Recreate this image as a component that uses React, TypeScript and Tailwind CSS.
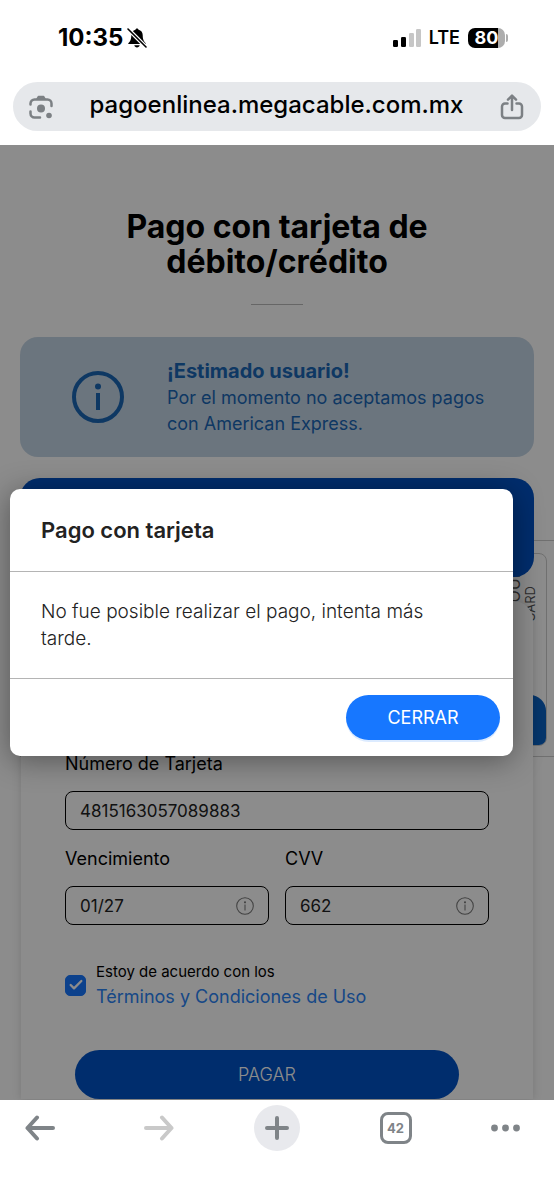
import React, { useState } from 'react';
import { Check } from 'lucide-react';

const StatusBar: React.FC = () => (
  <div className="flex h-[82px] items-center justify-between pr-[46px] pl-[58px] pb-1.5">
    <div className="flex items-center gap-1">
      <span className="text-2xl leading-7 font-bold">10:35</span>
      <svg viewBox="0 0 20 20" className="h-5 w-5">
        <path d="M10 .5c.9 0 1.500.6 1.500 1.300 2.600.6 4.200 2.600 4.200 5.200 0 4.500 1 6.300 3 8.200v.9H1.300v-.9c2-1.900 3-3.700 3-8.200 0-2.600 1.600-4.600 4.200-5.200C8.500 1.100 9.100.5 10 .5zM7.300 17.300h5.400c-.3 1.300-1.300 2.100-2.700 2.100s-2.400-.8-2.700-2.100z" fill="#000" />
        <path d="M1 1l18 18" stroke="#fff" strokeWidth="4" />
        <path d="M1 1l18 18" stroke="#000" strokeWidth="1.6" strokeLinecap="round" />
      </svg>
    </div>
    <div className="flex items-center gap-2">
      <svg viewBox="0 0 28 18" className="h-[18px] w-7">
        <rect x="0" y="11" width="5" height="7" rx="1.2" fill="#000" />
        <rect x="8" y="8" width="5" height="10" rx="1.2" fill="#000" />
        <rect x="16" y="4" width="5" height="14" rx="1.2" fill="#c6c6c6" />
        <rect x="23" y="0" width="5" height="18" rx="1.2" fill="#c6c6c6" />
      </svg>
      <span className="text-lg leading-6 font-semibold">LTE</span>
      <div className="flex items-center">
        <div className="flex h-5 w-[37px] items-center justify-center rounded-[7px] bg-linear-to-r from-black from-80% to-[#adadad] to-80%">
          <span className="text-lg leading-5 font-bold text-white">80</span>
        </div>
        <span className="ml-px h-2 w-0.5 rounded-r bg-[#adadad]" />
      </div>
    </div>
  </div>
);

const AddressBar: React.FC = () => (
  <div className="mx-[13px] mb-3.5 flex h-[49px] items-center justify-between rounded-full bg-[#e6e8eb] pr-[17px] pl-4 text-[#7c8084]">
    <button type="button" aria-label="Buscar con Lens">
      <svg viewBox="0 0 24 24" className="h-6 w-6" fill="none" stroke="currentColor" strokeWidth="2.5" strokeLinecap="round">
        <path d="M1.500 9.500V8.500a4 4 0 0 1 4-4h13a4 4 0 0 1 4 4V11M1.500 16.500v2a4 4 0 0 0 4 4H11" />
        <path d="M8 4l1.500-2.500h5L16 4z" fill="currentColor" strokeLinejoin="round" strokeWidth="1.5" />
        <circle cx="12" cy="13.5" r="4" fill="currentColor" stroke="none" />
        <circle cx="20" cy="20.5" r="2.8" fill="currentColor" stroke="none" />
      </svg>
    </button>
    <span className="pb-1 text-2xl leading-8 font-medium text-black">pagoenlinea.megacable.com.mx</span>
    <button type="button" aria-label="Compartir">
      <svg viewBox="0 0 24 26" className="h-[26px] w-6" fill="none" stroke="currentColor" strokeWidth="2.5" strokeLinecap="round" strokeLinejoin="round">
        <path d="M7.500 9.500H5a3 3 0 0 0-3 3V21a3 3 0 0 0 3 3h14a3 3 0 0 0 3-3v-8.500a3 3 0 0 0-3-3h-2.500M12 16V2M8 5.700L12 1.700l4 4" />
      </svg>
    </button>
  </div>
);

const InfoIcon: React.FC<{ className: string; stroke: number }> = ({ className, stroke }) => (
  <svg viewBox="0 0 52 52" className={className} fill="none" stroke="currentColor" strokeWidth={stroke}>
    <circle cx="26" cy="26" r="24" />
    <path d="M26 22v17" />
    <circle cx="26" cy="15.5" r="3" fill="currentColor" stroke="none" />
  </svg>
);

const Field: React.FC<{ id: string; label: string; value: string; info?: boolean }> = ({ id, label, value, info }) => (
  <div className="min-w-0">
    <label htmlFor={id} className="block text-lg leading-6">{label}</label>
    <div className="mt-[15px] flex h-[39px] items-center rounded-lg border border-black px-3.5">
      <input id={id} type="text" defaultValue={value} className="w-full min-w-0 bg-transparent text-[17px] leading-6 text-[#222] outline-none" />
      {info && <InfoIcon className="h-[18px] w-[18px] shrink-0 text-[#777]" stroke={3} />}
    </div>
  </div>
);

const Modal: React.FC<{ onClose: () => void }> = ({ onClose }) => (
  <div role="dialog" aria-labelledby="modal-title" className="absolute top-[344px] right-[41px] left-2.5 rounded-[10px] bg-white text-[#222] shadow-[0_4px_30px_rgba(0,0,0,0.4)]">
    <h2 id="modal-title" className="border-b border-[#b4b4b4] px-[31px] py-[27px] text-[22px] leading-7 font-semibold">Pago con tarjeta</h2>
    <p className="border-b border-[#b4b4b4] py-[26px] pr-20 pl-[31px] text-[19px] leading-[27px] font-light">
      No fue posible realizar el pago, intenta más tarde.
    </p>
    <div className="flex justify-end px-[13px] py-4">
      <button type="button" onClick={onClose} className="h-[45px] w-[154px] rounded-full bg-[#1777ff] text-lg leading-6 text-white shadow-[0_2px_0_rgba(23,119,255,0.15)]">CERRAR</button>
    </div>
  </div>
);

const PaymentForm: React.FC = () => (
  <div className="relative mx-5 mt-[21px]">
    {/* Card preview behind the form */}
    <div className="absolute top-[62px] -right-5 left-0 h-[217px] border-y border-[#ccc] bg-white">
      <div className="absolute top-3 right-[7px] left-0 flex h-[193px] items-start justify-end overflow-hidden rounded-lg border border-[#ccc] text-[#555]">
        <span className="mt-5 rotate-180 text-base leading-4 [writing-mode:vertical-rl]">OUI</span>
        <span className="mt-8 mr-2 rotate-180 text-[13px] leading-4 [writing-mode:vertical-rl]">CARD</span>
        <div className="absolute right-0 bottom-0 h-[50px] w-4 rounded-tr-2xl bg-[#0b63c4]" />
      </div>
    </div>
    <form className="relative" onSubmit={(e) => e.preventDefault()}>
      <div className="relative z-10 h-[99px] rounded-[20px] bg-[#0052c6]" />
      <div className="mx-px mt-6 rounded-t-[20px] bg-white px-11 pt-[151px] shadow-[0_0_10px_rgba(0,0,0,0.15)]">
        <Field id="numero" label="Número de Tarjeta" value="4815163057089883" />
        <div className="mt-[17px] grid grid-cols-2 gap-4">
          <Field id="vencimiento" label="Vencimiento" value="01/27" info />
          <Field id="cvv" label="CVV" value="662" info />
        </div>
        <div className="mt-[35px] flex items-center gap-2.5">
          <label htmlFor="terminos" className="relative flex h-[21px] w-[21px] shrink-0">
            <input id="terminos" type="checkbox" defaultChecked aria-label="Estoy de acuerdo con los Términos y Condiciones de Uso" className="peer h-full w-full appearance-none rounded-[5px] border border-[#1777ff] checked:bg-[#1777ff]" />
            <Check className="pointer-events-none absolute inset-0 m-auto hidden h-4 w-4 text-white peer-checked:block" strokeWidth={3.5} />
          </label>
          <div>
            <label htmlFor="terminos" className="block text-[15px] leading-6">Estoy de acuerdo con los</label>
            <a href="#terminos" className="block text-lg leading-[26px] text-[#2b83f5]">Términos y Condiciones de Uso</a>
          </div>
        </div>
        <div className="mt-10 mr-[30px] ml-2.5">
          <button type="submit" className="h-[49px] w-full rounded-full bg-[#0052c6] text-lg leading-6 font-light text-white">PAGAR</button>
        </div>
      </div>
    </form>
  </div>
);

const BottomBar: React.FC = () => (
  <nav className="flex h-[100px] shrink-0 items-start justify-between bg-white px-[17px] pt-[5px] text-[#7f8488]">
    <button type="button" aria-label="Atrás" className="flex h-[46px] w-[46px] items-center justify-center">
      <svg viewBox="0 0 32 26" className="h-[26px] w-8" fill="none" stroke="currentColor" strokeWidth="4" strokeLinecap="round" strokeLinejoin="round">
        <path d="M29 13H3.500M13 2.500L3.500 13 13 23.500" />
      </svg>
    </button>
    <button type="button" aria-label="Adelante" className="flex h-[46px] w-[46px] items-center justify-center text-[#c9c9c9]">
      <svg viewBox="0 0 32 26" className="h-[26px] w-8" fill="none" stroke="currentColor" strokeWidth="4" strokeLinecap="round" strokeLinejoin="round">
        <path d="M3 13h25.500M19 2.500L28.500 13 19 23.500" />
      </svg>
    </button>
    <button type="button" aria-label="Nueva pestaña" className="flex h-[46px] w-[46px] items-center justify-center rounded-full bg-[#e8e9ed]">
      <svg viewBox="0 0 26 26" className="h-[26px] w-[26px]" stroke="currentColor" strokeWidth="4" strokeLinecap="round">
        <path d="M13 3v20M3 13h20" />
      </svg>
    </button>
    <div className="flex h-[46px] w-[46px] items-center justify-center">
      <button type="button" aria-label="Pestañas abiertas" className="h-8 w-8 rounded-lg border-3 border-[#7f8488] text-[13px] leading-6 font-bold">42</button>
    </div>
    <button type="button" aria-label="Más" className="flex h-[46px] w-[46px] items-center">
      <svg viewBox="0 0 30 8" className="h-2 w-[30px]" fill="currentColor">
        <circle cx="3.5" cy="4" r="3.4" />
        <circle cx="14.5" cy="4" r="3.4" />
        <circle cx="25.5" cy="4" r="3.4" />
      </svg>
    </button>
  </nav>
);

export default function App() {
  const [open, setOpen] = useState(true);

  return (
    <div className="flex min-h-screen flex-col bg-white font-['Inter',sans-serif] text-black">
      <header>
        <StatusBar />
        <AddressBar />
      </header>
      <main className="relative grow overflow-hidden bg-white">
        <h1 className="px-20 pt-16 text-center text-[32px] leading-[35px] font-bold">Pago con tarjeta de débito/crédito</h1>
        <hr className="mx-auto mt-[25px] w-[52px] border-[#bbb]" />
        <section className="mx-5 mt-8 flex h-[120px] items-center rounded-[18px] bg-[#c4d5e5] pr-10 pl-[52px] text-[#1a66b5]">
          <InfoIcon className="h-[52px] w-[52px] shrink-0" stroke={4} />
          <div className="ml-[43px]">
            <h2 className="text-xl leading-7 font-bold">¡Estimado usuario!</h2>
            <p className="text-lg leading-[26px]">Por el momento no aceptamos pagos con American Express.</p>
          </div>
        </section>
        <PaymentForm />
        {open && (
          <div className="absolute inset-0 z-30 bg-black/45">
            <Modal onClose={() => setOpen(false)} />
          </div>
        )}
      </main>
      <BottomBar />
    </div>
  );
}
